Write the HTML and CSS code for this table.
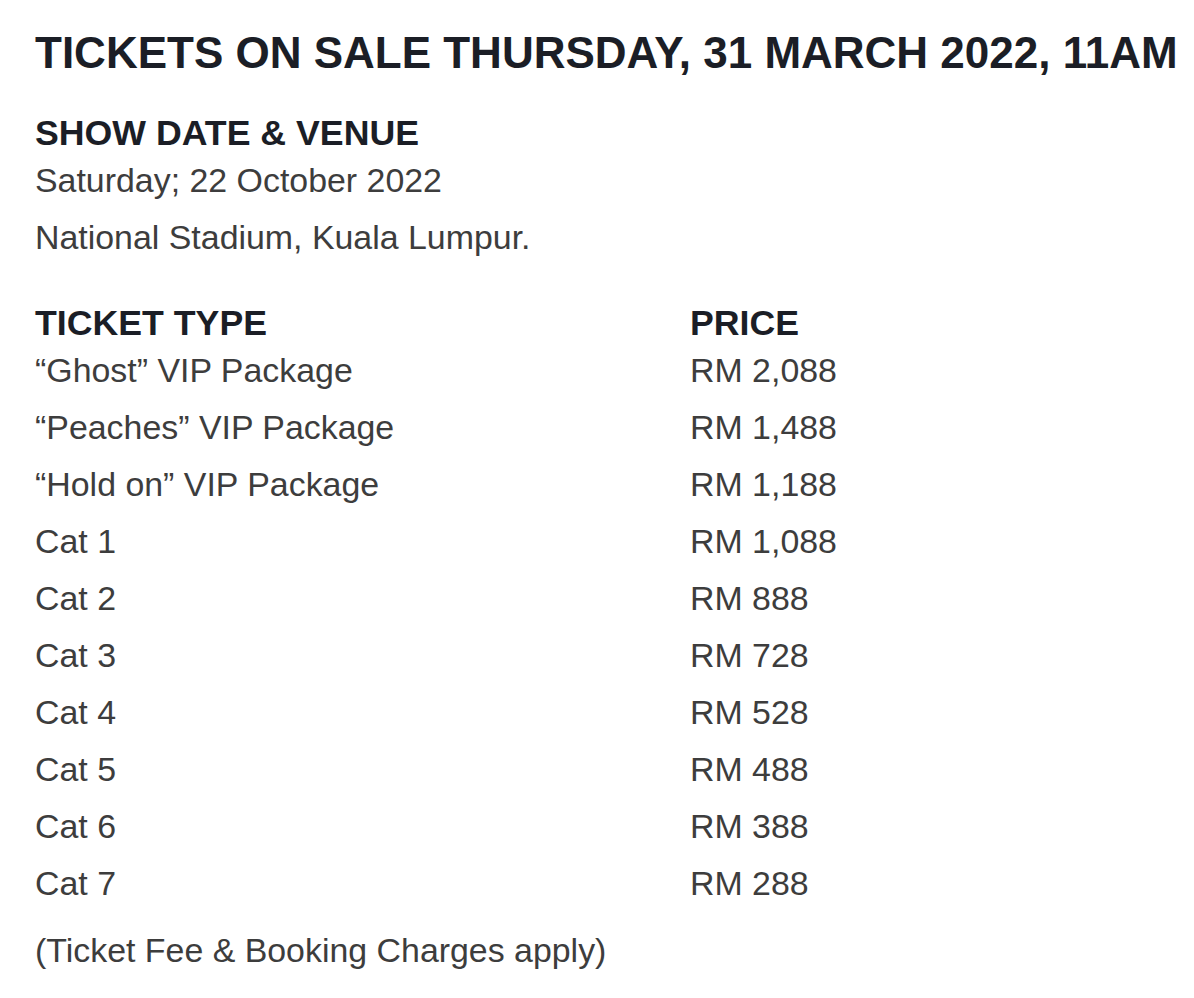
FILE: index.html
```html
<!DOCTYPE html>
<html lang="en">
<head>
<meta charset="utf-8">
<title>Tickets</title>
<link rel="stylesheet" href="styles.css">
</head>
<body>
<main class="page">
  <h1 class="title">TICKETS ON SALE THURSDAY, 31 MARCH 2022, 11AM</h1>
  <section class="venue">
    <h2 class="heading">SHOW DATE &amp; VENUE</h2>
    <p class="line">Saturday; 22 October 2022</p>
    <p class="line">National Stadium, Kuala Lumpur.</p>
  </section>
  <section class="prices">
    <h2 class="heading">TICKET TYPE</h2>
    <h2 class="heading">PRICE</h2>
    <span class="line">“Ghost” VIP Package</span><span class="line">RM 2,088</span>
    <span class="line">“Peaches” VIP Package</span><span class="line">RM 1,488</span>
    <span class="line">“Hold on” VIP Package</span><span class="line">RM 1,188</span>
    <span class="line">Cat 1</span><span class="line">RM 1,088</span>
    <span class="line">Cat 2</span><span class="line">RM 888</span>
    <span class="line">Cat 3</span><span class="line">RM 728</span>
    <span class="line">Cat 4</span><span class="line">RM 528</span>
    <span class="line">Cat 5</span><span class="line">RM 488</span>
    <span class="line">Cat 6</span><span class="line">RM 388</span>
    <span class="line">Cat 7</span><span class="line">RM 288</span>
  </section>
  <p class="line note">(Ticket Fee &amp; Booking Charges apply)</p>
</main>
</body>
</html>
```

FILE: styles.css
```css
html, body {
  margin: 0;
  padding: 0;
  background: #ffffff;
}

body {
  font-family: "Liberation Sans", Arial, Helvetica, sans-serif;
  width: 1194px;
  height: 998px;
  overflow: hidden;
}

.page {
  padding: 28px 0 0 35px;
  display: flex;
  flex-direction: column;
}

.title {
  margin: 0;
  font-size: 44px;
  line-height: 50px;
  font-weight: 700;
  color: #1b1e26;
  white-space: nowrap;
}

.venue {
  margin-top: 37px;
  display: flex;
  flex-direction: column;
}

.heading {
  margin: 0 0 1px;
  font-size: 35.7px;
  line-height: 36px;
  font-weight: 700;
  color: #1b1e26;
}

.line {
  margin: 0;
  font-size: 33.9px;
  line-height: 57px;
  color: #3d3d3d;
  white-space: nowrap;
}

.prices {
  margin-top: 39px;
  display: grid;
  grid-template-columns: 655px auto;
}

.note {
  margin-top: 10px;
}
```
